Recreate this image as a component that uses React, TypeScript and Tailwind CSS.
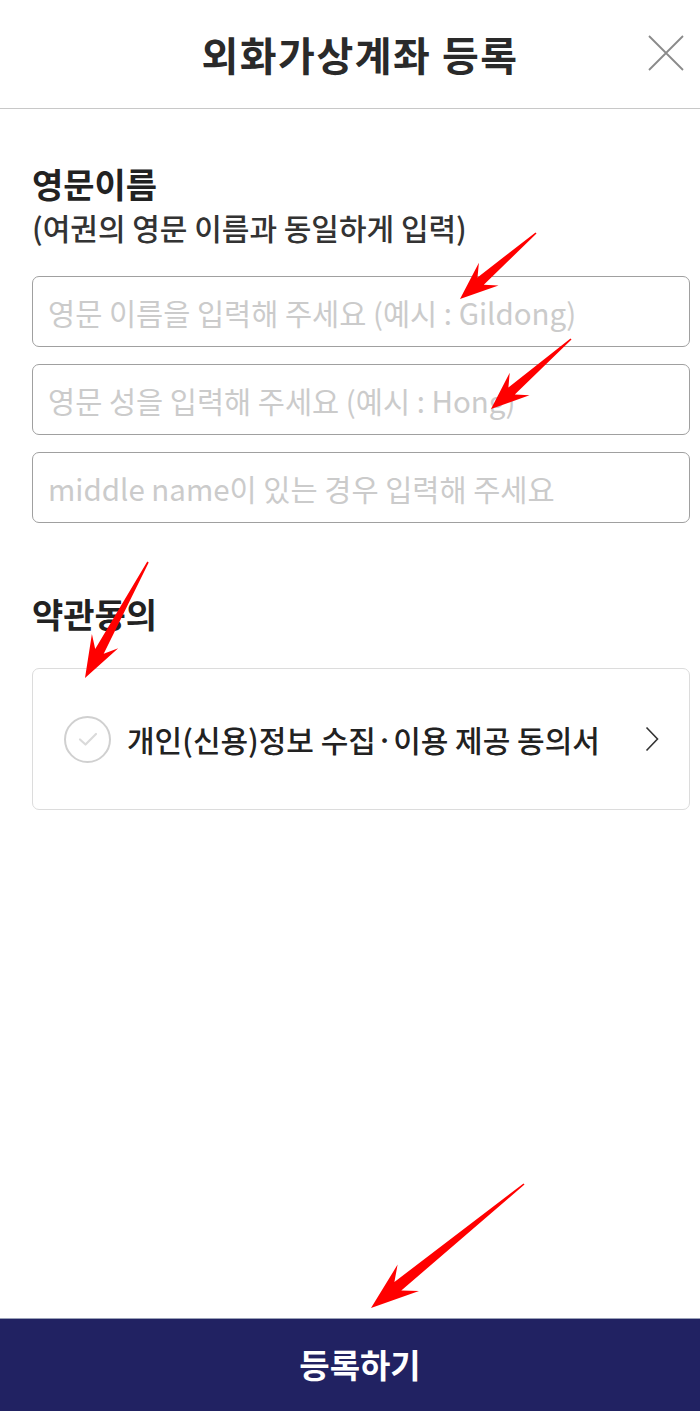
import React from "react";

type Pt = [number, number];

// tapered annotation arrow, tail -> tip
function arrowPoints(tail: Pt, tip: Pt, head: number, barb: number) {
  const dx = tip[0] - tail[0];
  const dy = tip[1] - tail[1];
  const len = Math.hypot(dx, dy);
  const d: Pt = [dx / len, dy / len];
  const n: Pt = [-d[1], d[0]];
  const at = (base: Pt, back: number, side: number): string => {
    const x = base[0] - d[0] * back + n[0] * side;
    const y = base[1] - d[1] * back + n[1] * side;
    return `${x.toFixed(1)},${y.toFixed(1)}`;
  };
  const shaft = barb * 0.32;
  return [
    at(tail, 0, 0.8),
    at(tip, head * 0.72, shaft),
    at(tip, head, barb),
    at(tip, 0, 0),
    at(tip, head, -barb),
    at(tip, head * 0.72, -shaft),
    at(tail, 0, -0.8),
  ].join(" ");
}

const arrows: { tail: Pt; tip: Pt; head: number; barb: number }[] = [
  { tail: [536, 233], tip: [460, 299], head: 38, barb: 15 },
  { tail: [571, 339], tip: [491, 409], head: 38, barb: 15 },
  { tail: [148, 562], tip: [85, 678], head: 42, barb: 15 },
  { tail: [524, 1184], tip: [371, 1308], head: 48, barb: 17 },
];

const inputs = [
  "영문 이름을 입력해 주세요 (예시 : Gildong)",
  "영문 성을 입력해 주세요 (예시 : Hong)",
  "middle name이 있는 경우 입력해 주세요",
];

export default function App() {
  return (
    <div
      className="relative flex h-[1411px] w-[700px] flex-col bg-white text-[#222]"
      style={{ fontFamily: '"Noto Sans CJK KR", "Noto Sans", sans-serif' }}
    >
      <header className="relative flex h-[109px] shrink-0 items-center justify-center border-b border-[#c8c8c8] pl-[20px]">
        <h1 className="text-[40px] font-bold leading-none tracking-[1.5px] text-[#2a2a2a]">
          외화가상계좌 등록
        </h1>
        <button className="absolute right-[15px] top-[35px] h-[36px] w-[38px]">
          <svg viewBox="0 0 38 36" className="h-full w-full" fill="none" stroke="#8a8a8a" strokeWidth="1.8">
            <path d="M2 1 L36 35 M36 1 L2 35" />
          </svg>
        </button>
      </header>

      <main className="flex flex-1 flex-col pl-8 pr-[10px] pt-[55px]">
        <h2 className="text-[34px] font-bold leading-[40px] text-[#222]">영문이름</h2>
        <p className="mt-[5px] text-[30px] font-medium leading-[36px] text-[#333]">
          (여권의 영문 이름과 동일하게 입력)
        </p>

        <div className="mt-[31px] flex flex-col gap-[17px]">
          {inputs.map((ph) => (
            <input
              key={ph}
              placeholder={ph}
              className="h-[71px] w-full rounded-[7px] border border-[#a0a0a0] px-[15px] text-[29.5px] outline-none placeholder:text-[#cbcbcb]"
            />
          ))}
        </div>

        <h2 className="mt-[71px] text-[34px] font-bold leading-[40px] text-[#222]">약관동의</h2>

        <div className="mt-[34px] flex h-[142px] items-center rounded-[7px] border border-[#dcdcdc] pl-[31px] pr-[30px]">
          <span className="flex h-[47px] w-[47px] shrink-0 items-center justify-center rounded-full border-2 border-[#d0d0d0]">
            <svg viewBox="0 0 24 24" className="h-[24px] w-[24px]" fill="none" stroke="#dadada" strokeWidth="2.2" strokeLinecap="round" strokeLinejoin="round">
              <path d="M4 12.5 L9.5 17.5 L20 7" />
            </svg>
          </span>
          <span className="ml-[16px] flex-1 text-[30px] font-medium text-[#222]">
            개인(신용)정보 수집·이용 제공 동의서
          </span>
          <svg viewBox="0 0 14 26" className="h-[26px] w-[14px]" fill="none" stroke="#333" strokeWidth="1.6">
            <path d="M1.5 1.5 L12.5 13 L1.5 24.5" />
          </svg>
        </div>
      </main>

      <button className="flex h-[93px] w-full shrink-0 items-center justify-center border-t border-[#9aa0b8] bg-[#212262] pl-[20px] text-[33px] font-bold text-white">
        등록하기
      </button>

      <svg className="pointer-events-none absolute inset-0 h-full w-full" viewBox="0 0 700 1411">
        {arrows.map((a, i) => (
          <polygon key={i} points={arrowPoints(a.tail, a.tip, a.head, a.barb)} fill="#ff0000" />
        ))}
      </svg>
    </div>
  );
}
